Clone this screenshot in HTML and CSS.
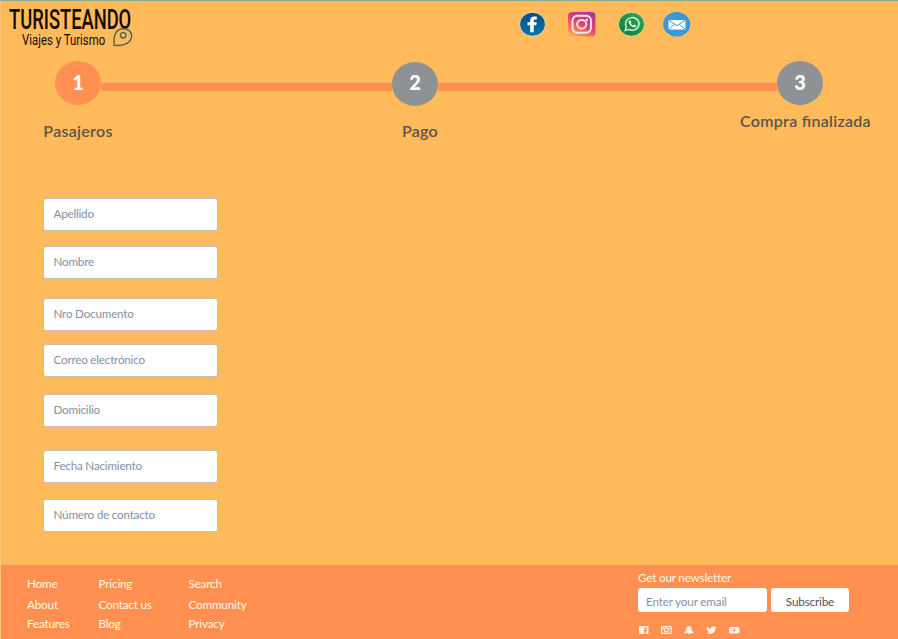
FILE: index.html
```html
<!DOCTYPE html>
<html lang="es">
<head>
<meta charset="utf-8">
<title>Turisteando - Viajes y Turismo</title>
<link rel="stylesheet" href="styles.css">
</head>
<body>
<header class="header">
  <svg class="logo" width="128" height="48" viewBox="0 0 128 48" role="img" aria-label="Turisteando Viajes y Turismo">
    <text class="logo-name" transform="translate(1 27.500) scale(.75 1)" textLength="163" lengthAdjust="spacingAndGlyphs">TURISTEANDO</text>
    <text class="logo-sub" transform="translate(14 44) scale(.82 1)" textLength="101.500" lengthAdjust="spacingAndGlyphs">Viajes y Turismo</text>
    <path class="pin" d="M106.200 44.400C105.500 36 106.500 28 115.500 27.800C120 27.700 123.500 30.500 123.600 34.800C123.600 42 116 45 106.200 44.400Z"/>
    <circle class="pin" cx="115.200" cy="34.300" r="2.700"/>
  </svg>
  <nav class="social">
    <a class="facebook"><svg width="28" height="26" viewBox="0 0 28 26"><defs><linearGradient id="fb" x2="0" y2="1"><stop stop-color="#064a80"/><stop offset="1" stop-color="#0878aa"/></linearGradient></defs><ellipse cx="14.500" cy="12.300" rx="13" ry="12" fill="url(#fb)" stroke="#f3ddb7" stroke-width="1"/><path d="M12.200 20.300V13.300H9.500V10.300H12.200V8.500C12.200 5.700 13.700 4.500 16.200 4.500H18.800V7.500H17.200C16 7.500 15.700 8.100 15.700 9V10.300H18.800L18.300 13.300H15.700V20.300Z" fill="#fff"/></svg></a>
    <a class="instagram"><svg width="28" height="25" viewBox="0 0 28 25"><defs><linearGradient id="ig" x1=".8" y1="0" x2=".25" y2="1"><stop stop-color="#a5399f"/><stop offset=".5" stop-color="#df4470"/><stop offset="1" stop-color="#ffa64e"/></linearGradient></defs><rect width="27.500" height="24.500" rx="4" fill="url(#ig)"/><g fill="none" stroke="#ffe9e4" stroke-width="1.900"><rect x="4.500" y="3.800" width="18.500" height="17" rx="5"/><ellipse cx="13.700" cy="12.300" rx="4.600" ry="4.300"/></g><circle cx="18.800" cy="7.800" r="1.200" fill="#ffe9e4"/></svg></a>
    <a class="whatsapp"><svg width="28" height="26" viewBox="0 0 28 26"><defs><linearGradient id="wa" x1="1" y1="0" x2="0" y2="1"><stop stop-color="#35a853"/><stop offset="1" stop-color="#067c3d"/></linearGradient></defs><ellipse cx="13.500" cy="12.300" rx="13" ry="12" fill="url(#wa)" stroke="#d9d9a0" stroke-width="1"/><path d="M7.200 18.500L8.300 14.900A6.800 6.300 0 1 1 11 17.400Z" fill="none" stroke="#dff5df" stroke-width="1.400"/><path d="M11.300 8.500L12.500 8.300L13.400 10.300L12.700 11.300C13.300 12.500 14.200 13.200 15.400 13.600L16.400 12.600L18.300 13.500C18.200 14.900 17 15.600 15.600 15.300C12.800 14.600 10.800 12.500 10.500 10.300C10.500 9.500 10.800 8.900 11.300 8.500Z" fill="#dff5df"/></svg></a>
    <a class="mail"><svg width="28" height="26" viewBox="0 0 28 26"><ellipse cx="13.700" cy="12.300" rx="13.500" ry="12.300" fill="#3898d9"/><rect x="5.500" y="8" width="17" height="9.500" rx=".8" fill="#fff"/><path d="M6 8.500L14 13.700L22 8.500M6 17L11.500 12.400M22 17L16.500 12.400" fill="none" stroke="#3898d9" stroke-width="1"/></svg></a>
  </nav>
</header>
<main>
  <ol class="steps">
    <li class="step step-one"><span class="dot">1</span><span class="label">Pasajeros</span></li>
    <li class="bar bar-one"></li>
    <li class="step step-two"><span class="dot">2</span><span class="label">Pago</span></li>
    <li class="bar bar-two"></li>
    <li class="step step-three"><span class="dot">3</span><span class="label">Compra finalizada</span></li>
  </ol>
  <form class="passenger">
    <input class="surname" placeholder="Apellido">
    <input class="name" placeholder="Nombre">
    <input class="document" placeholder="Nro Documento">
    <input class="email" placeholder="Correo electrónico">
    <input class="address" placeholder="Domicilio">
    <input class="birth" placeholder="Fecha Nacimiento">
    <input class="phone" placeholder="Número de contacto">
  </form>
</main>
<footer class="footer">
  <nav class="links">
    <a>Home</a><a>Pricing</a><a>Search</a>
    <a>About</a><a>Contact us</a><a>Community</a>
    <a>Features</a><a>Blog</a><a>Privacy</a>
  </nav>
  <section class="newsletter">
    <h2>Get our newsletter</h2>
    <form class="subscribe"><input placeholder="Enter your email"><button type="button">Subscribe</button></form>
    <div class="networks">
      <svg width="10" height="8" viewBox="0 0 10 8"><rect width="9.500" height="8" rx=".7"/><path class="cut" d="M5.600 8V5H4.500V3.700H5.600C5.500 2 6.200 1.200 8.200 1.400V2.500C7 2.400 6.900 2.700 6.900 3.700H8.200V5H6.900V8Z"/></svg>
      <svg width="11" height="8" viewBox="0 0 11 8"><rect class="line" x=".6" y=".6" width="9.500" height="6.800" rx=".6"/><path d="M.6 2.500H3M7.500 2.500H10" class="line"/><circle class="line" cx="5.300" cy="4" r="1.900"/></svg>
      <svg width="10" height="8" viewBox="0 0 10 8"><path d="M5 0C7 0 7.600 1.200 7.500 3.200L8.400 3.400L7.600 4.300C8 5.300 8.800 5.700 9.800 6L9.600 7.200L6.700 7.300L5 8L3.300 7.300L.4 7.200L.2 6C1.200 5.700 2 5.300 2.400 4.300L1.600 3.400L2.500 3.200C2.400 1.200 3 0 5 0Z"/></svg>
      <svg width="11" height="8" viewBox="0 0 11 8"><path d="M.7.7C2 2 3.400 2.600 5.200 2.600C5 .4 7.300-.6 8.800.8L10.300.4L9.700 1.400L10.600 1.200L9.600 2.200C9.500 6.600 5 9.400.4 7.200C1.600 7.200 2.600 6.900 3.400 6.300C2.400 6.200 1.700 5.600 1.500 4.800H2.300C1.200 4.500.6 3.700.6 2.800L1.400 3C.5 2.300.3 1.500.7.700Z"/></svg>
      <svg width="11" height="7" viewBox="0 0 11 7"><rect width="10.500" height="6.500" rx="1.200"/><path class="cut" d="M4.200 1.700L7.200 3.300L4.200 5Z"/></svg>
    </div>
  </section>
</footer>
</body>
</html>
```
FILE: styles.css
```css
* { box-sizing: border-box; }
body {
  margin: 0;
  width: 898px;
  height: 639px;
  display: flex;
  flex-direction: column;
  overflow: hidden;
  background: #ffba5c;
  border-top: 1px solid #83ab8d;
  border-left: 1px solid #ffc77b;
  font-family: Lato, "Liberation Sans", sans-serif;
}
main { flex: 1; }
.header { height: 60px; display: flex; align-items: flex-start; }
.logo { margin: 0 0 0 7px; flex: none; overflow: visible; }
.logo-name, .logo-sub { font-family: Roboto, sans-serif; fill: #120c04; }
.logo-name { font-size: 28px; font-weight: 500; }
.logo-sub { font-size: 15px; }
.pin { fill: none; stroke: #4c624f; stroke-width: 1.400; }
.social { display: flex; padding-top: 11px; margin-left: 382px; }
.social svg { display: block; }
.instagram { margin-left: 22px; }
.whatsapp { margin-left: 22px; }
.mail { margin-left: 17px; }

.steps { display: flex; height: 96px; margin: 0; padding: 0 0 0 54px; list-style: none; }
.step { width: 46px; display: flex; flex-direction: column; align-items: center; flex: none; }
.dot {
  width: 46px; height: 44px; flex: none; border-radius: 50%;
  display: flex; align-items: center; justify-content: center;
  background: #8e9294; color: #fff; font-size: 20px; font-weight: 900; line-height: 42px; padding-bottom: 2px;
}
.step-one .dot { background: #ff9052; }
.step-two .dot { padding-bottom: 4px; }
.step-two { padding-top: 1px; }
.label {
  color: #5b554b; font-size: 16px; line-height: 20px; font-weight: 600; white-space: nowrap; margin-top: 16px;
  letter-spacing: .28px; font-feature-settings: "liga" 1;
}
.step-two .label { margin-left: 10px; margin-top: 15px; }
.step-three .label { margin-left: 11px; margin-top: 6px; }
.bar { height: 8px; margin-top: 22px; background: #ff9052; }
.bar-one { width: 291px; }
.bar-two { width: 339px; }

.passenger { display: flex; flex-direction: column; width: 174px; margin: 41px 0 0 42px; }
.passenger input {
  width: 175px; height: 33px; padding: 0 9.5px 3px; border: 1px solid #c5bdb0; border-radius: 3px;
  background: #fff; font: 11.7px Lato, sans-serif; letter-spacing: -.22px; outline: none;
}
.passenger input::placeholder, .subscribe input::placeholder { color: #8491a5; opacity: 1; }
.name { margin-top: 15px; }
.document { margin-top: 19px; }
.email { margin-top: 13px; }
.address { margin-top: 17px; }
.birth { margin-top: 23px; }
.phone { margin-top: 16px; }

.footer { height: 74px; flex: none; display: flex; background: #ff9052; color: #fff0df; }
.links {
  display: grid; grid-template-columns: 71.5px 90px 100px; grid-template-rows: 21px 19px 19px;
  padding: 8px 0 0 26px; width: 637px; font-size: 11.7px; letter-spacing: -.2px; line-height: 20px; font-weight: 500;
}
.newsletter { padding-top: 4px; }
.newsletter h2 { margin: 0; font-size: 11.7px; letter-spacing: -.2px; line-height: 16px; font-weight: 500; }
.subscribe { display: flex; gap: 4px; margin-top: 3px; }
.subscribe input, .subscribe button { height: 24px; border: 0; border-radius: 3px; background: #fff; font: 11.7px Lato, sans-serif; letter-spacing: -.16px; }
.subscribe input { width: 129px; padding: 2px 8px 0; }
.subscribe button { width: 78px; padding: 1px 0 0; color: #505560; }
.networks { display: flex; align-items: center; gap: 12px; margin-top: 14px; padding-left: 1px; }
.networks svg { display: block; fill: #fff0e4; }
.networks .cut { fill: #ff9052; }
.networks .line { fill: none; stroke: #fff0e4; stroke-width: 1.200; }
```
